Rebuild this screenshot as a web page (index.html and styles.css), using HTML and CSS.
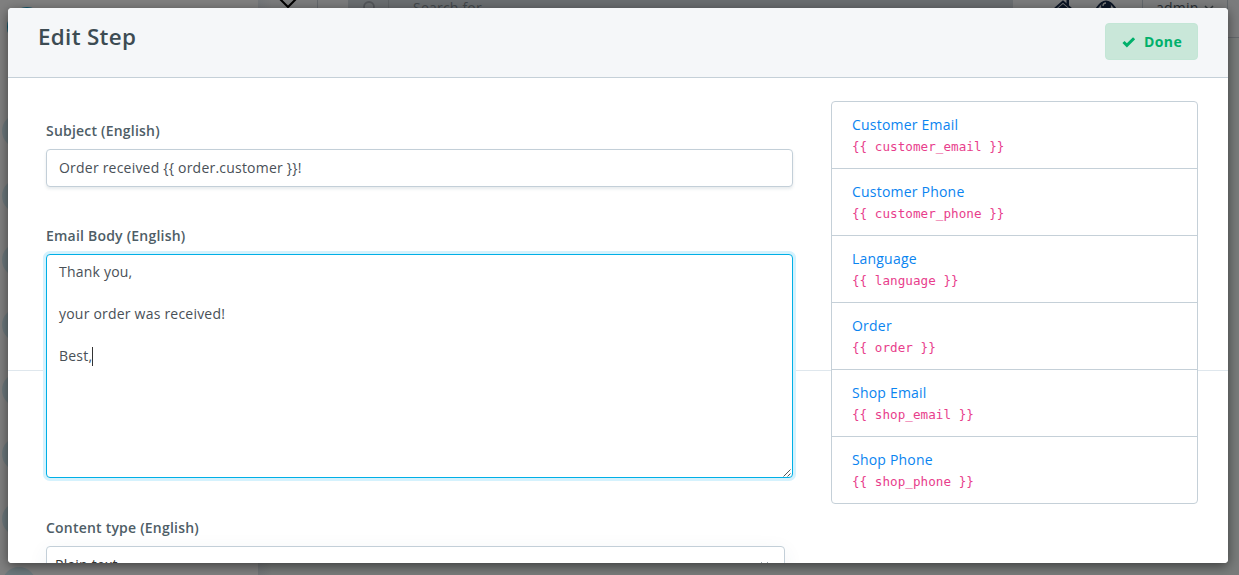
FILE: index.html
```html
<!DOCTYPE html>
<html lang="en">
<head>
<meta charset="utf-8">
<title>Edit Step</title>
<link rel="stylesheet" href="styles.css">
</head>
<body>
<div class="page">
  <aside class="sidebar">
    <div class="logo"></div>
    <ul class="menu"><li></li><li></li><li></li><li></li><li></li><li></li><li></li><li></li></ul>
  </aside>
  <div class="main">
    <div class="topbar">
      <div class="toggle"><svg width="20" height="20" viewBox="0 0 20 20"><path d="M2-1 10 7 18-1" fill="none" stroke="#000" stroke-width="2"/></svg></div>
      <div class="search">
        <div class="search-icon"><svg width="16" height="18" viewBox="0 0 16 18"><circle cx="8" cy="7" r="5" fill="none" stroke="#53565a" stroke-width="1.8"/><path d="m11 11 4 4" stroke="#53565a" stroke-width="2"/></svg></div>
        <span>Search for...</span>
      </div>
      <div class="tools">
        <svg width="18" height="16" viewBox="0 0 18 16"><path d="M1 8.500 9 1.500l8 7" fill="none" stroke="#0b1526" stroke-width="2"/><path d="M12.500 0H15v6l-2.500-2zM9 4l6 5v7H3V9z" fill="#0b1526"/></svg>
        <svg width="20" height="16" viewBox="0 0 20 16"><path d="M1 8Q10-5 19 8 10 20 1 8Z" fill="none" stroke="#0b1526" stroke-width="2"/><circle cx="10" cy="6" r="5" fill="#0b1526"/><path d="M7 6a3 3 0 0 1 3-3" fill="none" stroke="#7a7c7b" stroke-width="1.300"/></svg>
      </div>
      <div class="user">admin <svg width="10" height="7" viewBox="0 0 10 7"><path d="m1 1 4 4 4-4" fill="none" stroke="#33393d" stroke-width="1.500"/></svg></div>
    </div>
  </div>
</div>
<div class="modal">
  <header class="modal-header">
    <h1>Edit Step</h1>
    <button class="done"><svg width="14" height="12" viewBox="0 0 14 12"><path d="m1.500 6 3.400 3.400 7.200-7.200" fill="none" stroke="#00b06b" stroke-width="3"/></svg>Done</button>
  </header>
  <div class="modal-body">
    <div class="form">
      <label>Subject (English)</label>
      <div class="input">Order received {{ order.customer }}!</div>
      <label>Email Body (English)</label>
      <div class="textarea">Thank you,<br><br>your order was received!<br><br>Best,<i class="caret"></i>
        <svg class="grip" width="8" height="8" viewBox="0 0 8 8"><path d="M.5 7.500l7-7M4.500 7.500l3-3" fill="none" stroke="#555"/></svg>
      </div>
      <label>Content type (English)</label>
      <div class="select">Plain text<svg width="9" height="6" viewBox="0 0 9 6"><path d="m1 1 3.500 3.500L8 1" fill="none" stroke="#9aa5ab"/></svg></div>
    </div>
    <div class="variables">
      <div class="variable"><a>Customer Email</a><code>{{ customer_email }}</code></div>
      <div class="variable"><a>Customer Phone</a><code>{{ customer_phone }}</code></div>
      <div class="variable"><a>Language</a><code>{{ language }}</code></div>
      <div class="variable"><a>Order</a><code>{{ order }}</code></div>
      <div class="variable"><a>Shop Email</a><code>{{ shop_email }}</code></div>
      <div class="variable"><a>Shop Phone</a><code>{{ shop_phone }}</code></div>
    </div>
  </div>
</div>
</body>
</html>
```
FILE: styles.css
```css
* { box-sizing: border-box; }
body { margin: 0; height: 575px; overflow: hidden; font: 14px/21px "Open Sans", sans-serif; letter-spacing: .21px; color: #495057; background: #797c7b; }
svg { display: block; flex: none; }
.page { display: flex; height: 575px; overflow: hidden; }
.sidebar { width: 258px; height: 575px; background: #808080; overflow: hidden; flex: none; }
.logo { width: 40px; height: 40px; margin: 7px 0 0 7px; border-radius: 50%; background: #0e566c; }
.menu { margin: 67px 0 0 2px; padding: 0; list-style: none; display: grid; gap: 30.700px; }
.menu li { width: 34px; height: 34px; border-radius: 50%; background: #6c787c; }
.main { flex: 1; background: linear-gradient(90deg, #717476, #797c7b 14px); }
.topbar { display: flex; height: 38px; background: linear-gradient(90deg, #74777a, #7b7c7d 14px); border-bottom: 1px solid #64686c; }
.toggle { width: 60px; height: 37px; padding-left: 20px; border-right: 1px solid #65696d; }
.search { display: flex; width: 665px; margin-left: 30px; background: #6a6e71; color: #42474b; line-height: 16px; }
.search-icon { width: 41px; height: 37px; padding-left: 13px; border-right: 1px solid #5f6366; }
.search span { padding-left: 24px; }
.tools { display: flex; gap: 24px; width: 129px; padding-left: 41px; }
.user { display: flex; width: 86px; gap: 6px; padding-left: 13px; line-height: 16px; border: solid #63686c; border-width: 0 1px; color: #282e33; }
.user svg { margin-top: 5px; }
.modal { position: absolute; left: 8px; top: 8px; width: 1220px; height: 555px; overflow: hidden; background: #fff; border-radius: 4px; box-shadow: 0 3px 12px rgba(0,0,0,.5); }
.modal-header { display: flex; justify-content: space-between; align-items: flex-start; height: 70px; padding: 15px 30px 0; background: #f5f7f9; border-bottom: 1px solid #c5d0d8; }
h1 { margin: 0; font-size: 22.400px; line-height: 27px; font-weight: 600; letter-spacing: .32px; color: #3d4c53; }
.done { display: flex; align-items: center; gap: 8px; width: 93px; height: 37px; padding: 0 0 0 16px; border: 1px solid #c3e6d6; border-radius: 4px; background: #c9e7d9; color: #00b06b; font: 700 14px/21px "Open Sans", sans-serif; letter-spacing: .4px; }
.modal-body { display: flex; gap: 38px; height: 485px; padding: 23px 30px 0 38px; background: linear-gradient(#dfe7ed, #dfe7ed) 0 292px / 100% 1px no-repeat #fff; }
.form { width: 747px; padding-top: 19px; }
label { display: block; height: 29px; font-weight: 600; color: #4e5d66; }
.input, .textarea, .select { border: 1px solid #c3cfd8; border-radius: 4px; background: #fff; }
.input { height: 38px; margin-bottom: 38px; padding: 7px 12px; box-shadow: 0 2px 3px rgba(60,90,110,.12); }
.textarea { position: relative; height: 224px; margin-bottom: 39px; padding: 6px 12px; border-color: #00afe6; box-shadow: 0 0 0 3px #d5f2fd; }
.caret { display: inline-block; width: 1px; height: 19px; background: #333; vertical-align: -5px; }
.grip { position: absolute; right: 1px; bottom: 0; }
.select { display: flex; justify-content: space-between; width: 739px; height: 38px; padding: 7px 15px 8px 8px; color: #333; box-shadow: 0 5px 20px rgba(60,90,110,.07); }
.select svg { margin-top: 7px; }
.variables { width: 367px; height: 403px; border: 1px solid #c5d0d8; border-radius: 4px; background: #fff; }
.variable { height: 67px; padding: 12px 20px; border-bottom: 1px solid #c5d0d8; }
.variable:last-child { border: 0; }
.variable a, .variable code { display: block; }
.variable a { color: #0a84f0; }
.variable code { margin-top: 1px; color: #e83e8c; font: 12.600px/21px "DejaVu Sans Mono", monospace; letter-spacing: .04px; }
```
